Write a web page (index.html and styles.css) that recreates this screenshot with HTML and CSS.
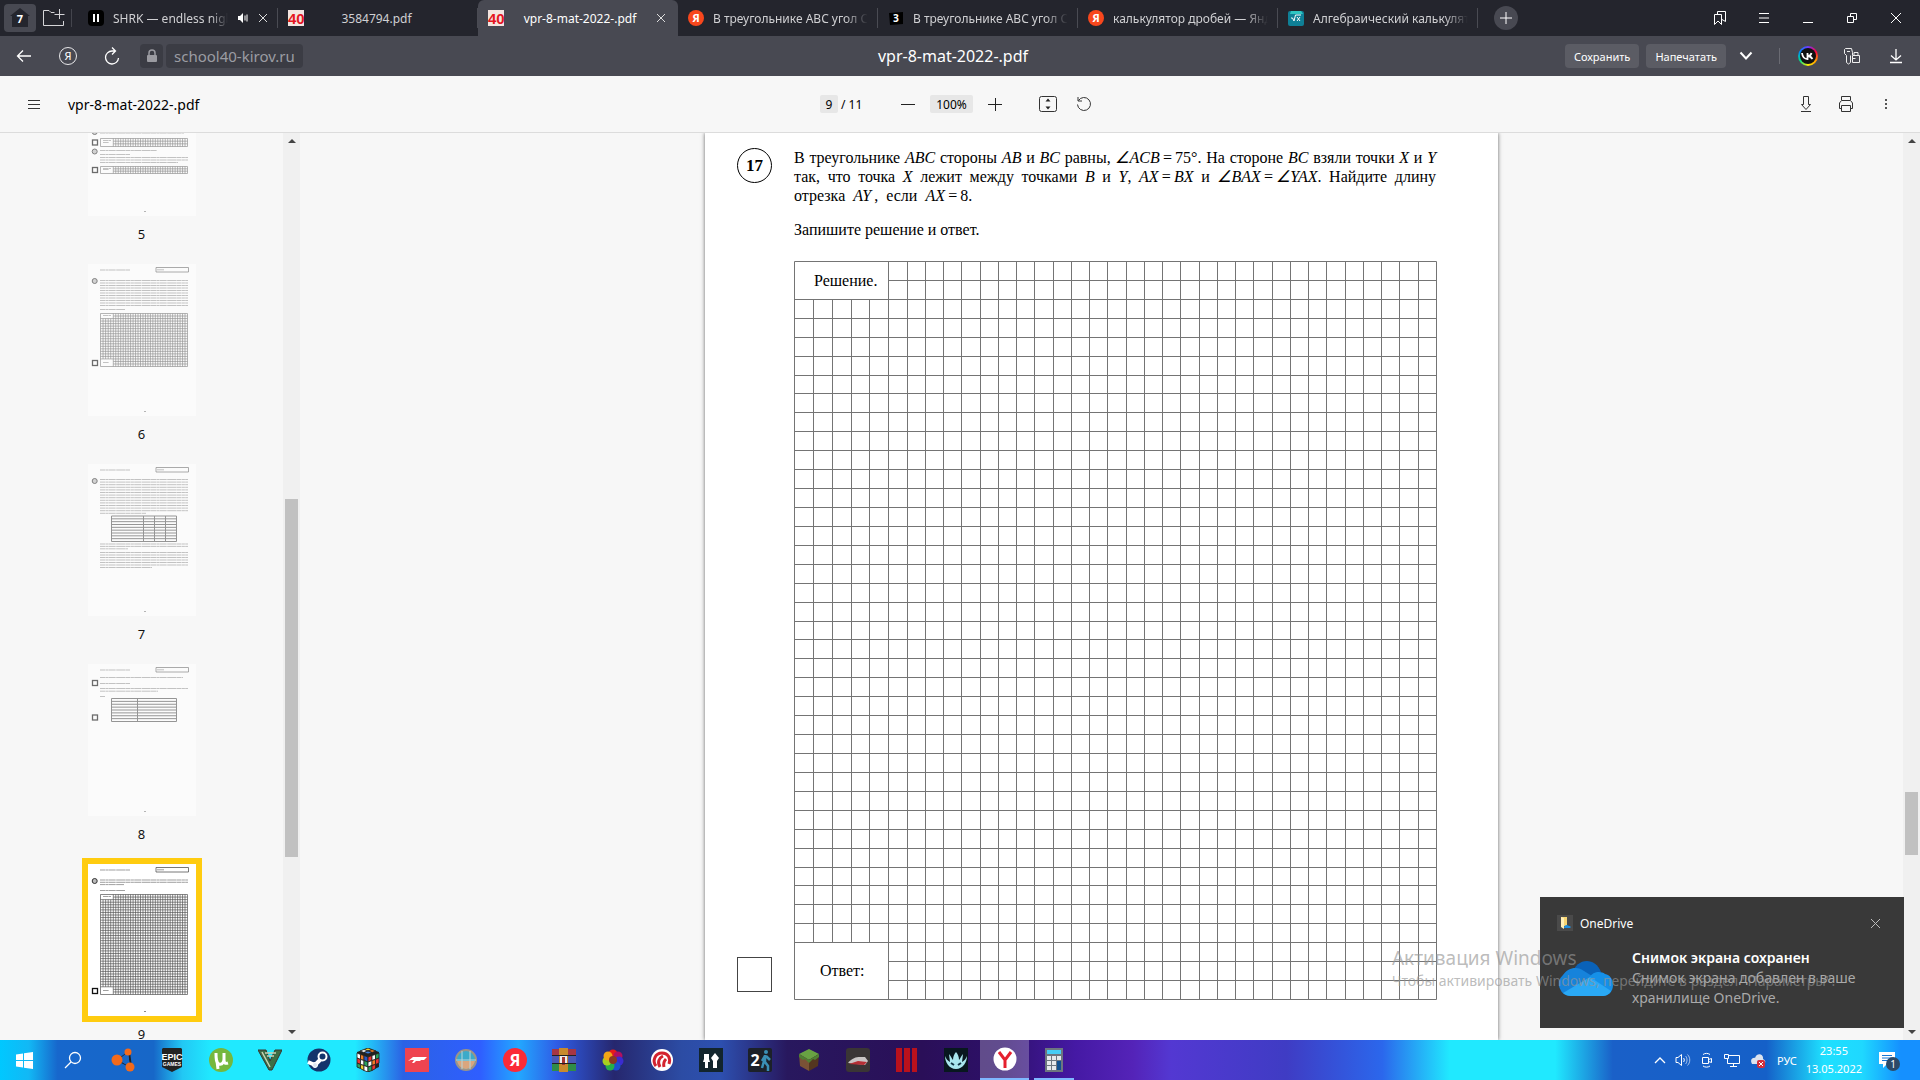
FILE: index.html
```html
<!DOCTYPE html>
<html lang="ru">
<head>
    <meta charset="UTF-8">
    <meta name="viewport" content="width=device-width, initial-scale=1.0">
    <title>vpr-8-mat-2022-.pdf</title>
    <link rel="stylesheet" href="styles.css">
</head>
<body>
    <!-- Вкладки -->
    <header class="tabs">
        <button class="home" aria-label="Все вкладки">
            <svg width="24" height="22" viewBox="0 0 24 22"><path d="M12 1 22 9h-2v11H4V9H2z" fill="#24252d"/></svg>
            <span class="home-count">7</span>
        </button>
        <button class="icon-btn folder" aria-label="Новая группа">
            <svg width="24" height="20" viewBox="0 0 24 20" fill="none" stroke="#d5d5d8"><path d="M12.500 4.500H9L7 2.500H1.500v15h20V13M17.500 1v10M12.500 6.500h10"/></svg>
        </button>
        <nav class="tab-list">
            <a href="#" class="tab">
                <svg width="16" height="16" viewBox="0 0 16 16"><rect width="16" height="16" rx="4"/><path d="M5 4h2v8H5zM9 4h2v8H9z" fill="#fff"/></svg>
                <span class="tab-title">SHRK — endless night</span>
                <svg width="12" height="12" viewBox="0 0 12 12" fill="#fff"><path d="M1 4h2l3-3v10L3 8H1zM7.500 3.500h1v5h-1zM9.500 2.500h1v7h-1z"/></svg>
                <svg width="10" height="10" viewBox="0 0 10 10" stroke="#ddd"><path d="m1 1 8 8M9 1 1 9"/></svg>
            </a>
            <a href="#" class="tab file">
                <svg width="16" height="16" viewBox="0 0 16 16"><rect width="16" height="16" fill="#f3e4e0"/><text x="0" y="14" class="logo40">40</text></svg>
                <span class="tab-title centered">3584794.pdf</span>
            </a>
            <a href="#" class="tab active">
                <svg width="16" height="16" viewBox="0 0 16 16"><rect width="16" height="16" fill="#f3e4e0"/><text x="0" y="14" class="logo40">40</text></svg>
                <span class="tab-title centered">vpr-8-mat-2022-.pdf</span>
                <svg width="10" height="10" viewBox="0 0 10 10" stroke="#ddd"><path d="m1 1 8 8M9 1 1 9"/></svg>
            </a>
            <a href="#" class="tab">
                <svg width="16" height="16" viewBox="0 0 16 16"><circle cx="8" cy="8" r="8" fill="#f8471d"/><text x="8" y="12" class="ya">Я</text></svg>
                <span class="tab-title">В треугольнике ABC угол C</span>
            </a>
            <a href="#" class="tab">
                <svg width="16" height="16" viewBox="0 0 16 16"><path d="M1 3 15 2v12L2 15z"/><text x="8" y="12" class="ya three">З</text></svg>
                <span class="tab-title">В треугольнике ABC угол C</span>
            </a>
            <a href="#" class="tab">
                <svg width="16" height="16" viewBox="0 0 16 16"><circle cx="8" cy="8" r="8" fill="#f8471d"/><text x="8" y="12" class="ya">Я</text></svg>
                <span class="tab-title">калькулятор дробей — Яндекс</span>
            </a>
            <a href="#" class="tab">
                <svg width="16" height="16" viewBox="0 0 16 16"><rect width="16" height="15" y="1" rx="2" fill="#0f7f96"/><path d="M3 1h10l2 3H2z" fill="#2fc5c2"/><path d="m3 8 1.500 0L6 11l1.500-6H13M9 7l3 4M12 7l-3 4" fill="none" stroke="#fff"/></svg>
                <span class="tab-title">Алгебраический калькулятор</span>
            </a>
        </nav>
        <button class="new-tab" aria-label="Новая вкладка">
            <svg width="12" height="12" viewBox="0 0 12 12" stroke="#fff"><path d="M6 0v12M0 6h12"/></svg>
        </button>
        <div class="window-icons">
            <button class="icon-btn" aria-label="Закладки"><svg width="14" height="16" viewBox="0 0 14 16" fill="none" stroke="#fff"><path d="M1.500 4.500h7v10L5 11l-3.500 3.500zM4.500 4V1.500h8v10L9 9.500"/></svg></button>
            <button class="icon-btn" aria-label="Меню"><svg width="12" height="12" viewBox="0 0 12 12" stroke="#fff"><path d="M1 1.500h10M1 6h10M1 10.500h10"/></svg></button>
            <button class="icon-btn" aria-label="Свернуть"><svg width="12" height="12" viewBox="0 0 12 12" stroke="#fff"><path d="M1 10.500h10"/></svg></button>
            <button class="icon-btn" aria-label="Развернуть"><svg width="12" height="12" viewBox="0 0 12 12" fill="none" stroke="#fff"><path d="M1.500 4.500h6v6h-6zM4.500 4V1.500h6v6H8"/></svg></button>
            <button class="icon-btn" aria-label="Закрыть"><svg width="12" height="12" viewBox="0 0 12 12" stroke="#fff"><path d="m1 1 10 10M11 1 1 11"/></svg></button>
        </div>
    </header>

    <!-- Адресная строка -->
    <div class="address">
        <div class="address-left">
            <button class="icon-btn" aria-label="Назад"><svg width="16" height="16" viewBox="0 0 16 16" fill="none" stroke="#fff" stroke-width="1.300"><path d="M15 8H1.500M7 2.500 1.500 8 7 13.500"/></svg></button>
            <button class="icon-btn" aria-label="Яндекс"><svg width="20" height="20" viewBox="0 0 20 20"><circle cx="10" cy="10" r="8.500" fill="none" stroke="#e8e8ea"/><text x="10" y="14" class="ya home-ya">Я</text></svg></button>
            <button class="icon-btn" aria-label="Обновить"><svg width="16" height="18" viewBox="0 0 16 18" fill="none" stroke="#fff" stroke-width="1.300"><path d="M11 4H8a6.500 6.500 0 1 0 6.500 7M8 .5 11.500 4 8 7.500"/></svg></button>
            <span class="lock"><svg width="12" height="14" viewBox="0 0 12 14"><path d="M3 6V4a3 3 0 0 1 6 0v2" fill="none" stroke="#9b9ba1" stroke-width="1.500"/><rect x="1" y="6" width="10" height="7" rx="1" fill="#9b9ba1"/></svg></span>
            <a href="#" class="url">school40-kirov.ru</a>
        </div>
        <div class="address-title">vpr-8-mat-2022-.pdf</div>
        <div class="address-right">
            <button class="chip">Сохранить</button>
            <button class="chip">Напечатать</button>
            <button class="icon-btn arrow" aria-label="Ещё"><svg width="14" height="10" viewBox="0 0 14 10" fill="none" stroke="#fff" stroke-width="2"><path d="m1.500 1.500 5.500 6 5.500-6"/></svg></button>
            <span class="split"></span>
            <button class="icon-btn vk" aria-label="VK"><span class="vk-ring"><svg width="16" height="16" viewBox="0 0 16 16"><circle cx="8" cy="8" r="8" fill="#111"/><path d="M2 5c.5 4 2.500 6 5.500 6V5M8 8c1.500 0 3-1 3.500-3M8 8c2 0 3.500 1.500 4.500 3" fill="none" stroke="#fff" stroke-width="1.800"/></svg></span></button>
            <button class="icon-btn" aria-label="Пароли"><svg width="18" height="18" viewBox="0 0 18 18" fill="none" stroke="#eee"><path d="M9.500 8V5.500l-1-4h-6l-1 1v4l2 2v7l2 1.500 2-1.500v-7M4 4.500h3M9.500 8.500h7v7h-7zM11 8V5.500h4V8M9.500 11.500h3"/></svg></button>
            <button class="icon-btn" aria-label="Загрузки"><svg width="14" height="16" viewBox="0 0 14 16" fill="none" stroke="#fff" stroke-width="1.300"><path d="M7 1v11M2 7.500 7 12l5-4.500M1 14.500h12"/></svg></button>
        </div>
    </div>

    <!-- Панель просмотра PDF -->
    <div class="toolbar">
        <div class="toolbar-left">
            <button class="icon-btn" aria-label="Миниатюры"><svg width="12" height="10" viewBox="0 0 12 10" stroke="#333"><path d="M0 1.500h12M0 5.500h12M0 9.500h12"/></svg></button>
            <span class="file-name">vpr-8-mat-2022-.pdf</span>
        </div>
        <div class="toolbar-center">
            <input class="page-input" type="text" value="9" aria-label="Страница">
            <span class="page-total">/ 11</span>
            <button class="icon-btn" aria-label="Уменьшить"><svg width="14" height="14" viewBox="0 0 14 14" stroke="#222"><path d="M0 7.500h14"/></svg></button>
            <input class="zoom-input" type="text" value="100%" aria-label="Масштаб">
            <button class="icon-btn" aria-label="Увеличить"><svg width="14" height="14" viewBox="0 0 14 14" stroke="#222"><path d="M0 7.500h14M7.500 1v13"/></svg></button>
            <button class="icon-btn fit" aria-label="По высоте"><svg width="18" height="16" viewBox="0 0 18 16"><rect x=".5" y=".5" width="17" height="15" rx="2" fill="none" stroke="#333"/><path d="m9 2.500 2.500 3h-5zM9 13.500l2.500-3h-5z" fill="#222"/></svg></button>
            <button class="icon-btn" aria-label="Повернуть"><svg width="16" height="16" viewBox="0 0 16 16" fill="none" stroke="#333"><path d="M2 1v4h4M2.500 4.500a6.500 6.500 0 1 1-1 4"/></svg></button>
        </div>
        <div class="toolbar-right">
            <button class="icon-btn" aria-label="Скачать"><svg width="12" height="18" viewBox="0 0 12 18" fill="none" stroke="#333"><path d="M3.500 1.500h5v8h2L6 14.500 1.500 9.500h2zM1 16.500h10"/></svg></button>
            <button class="icon-btn" aria-label="Печать"><svg width="16" height="18" viewBox="0 0 16 18" fill="none" stroke="#333"><path d="M3.500 5V1.500h9V5M3.500 13.500h-2V8l2-2.500h9l2 2.500v5.500h-2M3.500 10.500h9v6h-9z"/></svg></button>
            <button class="icon-btn" aria-label="Меню документа"><svg width="4" height="12" viewBox="0 0 4 12" fill="#555"><path d="M1 1h2v2H1zM1 5h2v2H1zM1 9h2v2H1z"/></svg></button>
        </div>
    </div>

    <main class="viewer">
        <aside class="sidebar">
            <div class="thumbs" id="thumbs"></div>
            <div class="scrollbar">
                <span class="up"></span>
                <span class="scroll-thumb side-thumb"></span>
                <span class="down"></span>
            </div>
        </aside>
        <div class="document">
            <article class="page">
                <span class="number">17</span>
                <div class="task">
                    <p class="line">В треугольнике <i>ABC</i> стороны <i>AB</i> и <i>BC</i> равны, <i>∠ACB</i>&#8201;=&#8201;75°. На стороне <i>BC</i> взяли точки <i>X</i> и <i>Y</i></p>
                    <p class="line">так, что точка&nbsp;<i>X</i> лежит между точками <i>B</i> и <i>Y</i>, <i>AX</i>&#8201;=&#8201;<i>BX</i> и <i>∠BAX</i>&#8201;=&#8201;<i>∠YAX</i>. Найдите длину</p>
                    <p>отрезка&ensp;<i>AY</i>&#8201;,&ensp;если&ensp;<i>AX</i>&#8201;=&#8201;8.</p>
                    <p class="hint">Запишите решение и ответ.</p>
                </div>
                <span class="score"></span>
                <svg class="squares" width="643" height="741" viewBox="0 0 643 741">
                    <path id="squares" fill="none" stroke="#747474"/>
                    <text x="20" y="25">Решение.</text>
                    <text x="26" y="715">Ответ:</text>
                </svg>
            </article>
        </div>
        <div class="scrollbar">
            <span class="up"></span>
            <span class="scroll-thumb doc-thumb"></span>
            <span class="down"></span>
        </div>
    </main>

    <!-- Уведомление -->
    <section class="toast">
        <div class="toast-head">
            <svg width="16" height="16" viewBox="0 0 16 16"><rect width="16" height="16" fill="#4a4a4a"/><path d="M4 2h6v9H4z" fill="#f8d673"/><path d="M4 2 7 3v11l-3-2z" fill="#fff0b8"/><path d="M7 13c0-3 3-4 5-2 2-.5 2 2 1 2z" fill="#1e8fe0"/></svg>
            <span>OneDrive</span>
            <button class="icon-btn toast-close" aria-label="Закрыть уведомление"><svg width="11" height="11" viewBox="0 0 11 11" stroke="#bbb"><path d="m1 1 9 9M10 1l-9 9"/></svg></button>
        </div>
        <div class="toast-body">
            <svg width="54" height="36" viewBox="0 0 54 36">
                <path d="M13 14C17-2 36-4 42 12L32 24z" fill="#0a62b8"/>
                <path d="M12 36A12 12 0 0 1 4 15c5-8 15-9 21-4l16 10-12 15z" fill="#1683db"/>
                <path d="M30 18c4-7 12-7 16-4 5 1 8 5 8 11 0 7-5 11-10 11H30z" fill="#1590e8"/>
                <path d="M4 33 31 17l21 14c-2 4-6 5-9 5H12c-3 0-6-1-8-3z" fill="#2aa9f5"/>
            </svg>
            <div class="toast-text">
                <b>Снимок экрана сохранен</b>
                <p>Снимок экрана добавлен в ваше хранилище OneDrive.</p>
            </div>
        </div>
    </section>
    <div class="watermark">
        <div class="watermark-title">Активация Windows</div>
        <div>Чтобы активировать Windows, перейдите в раздел "Параметры".</div>
    </div>

    <!-- Панель задач -->
    <footer class="taskbar">
        <button class="app start" aria-label="Пуск"><svg width="17" height="17" viewBox="0 0 17 17" fill="#fff"><path d="m0 2.500 7-1V8H0zM8 1.300 17 0v8H8zM0 9h7v6.500l-7-1zM8 9h9v8l-9-1.300z"/></svg></button>
        <button class="app search" aria-label="Поиск"><svg width="18" height="18" viewBox="0 0 18 18" fill="none" stroke="#fff" stroke-width="1.300"><circle cx="11" cy="7" r="5.500"/><path d="m7 11-6 6"/></svg></button>
        <button class="app" aria-label="Связи"><svg width="24" height="24" viewBox="0 0 24 24"><path d="M7 12 18 4l2 15z" fill="none" stroke="#222" stroke-width="2"/><path d="M7 12 17 4l2 15z" fill="#1767c8"/><g fill="#f26a1b"><circle cx="6" cy="12" r="5.500"/><circle cx="17" cy="4" r="3.500"/><circle cx="19" cy="19" r="4.500"/></g></svg></button>
        <button class="app" aria-label="Epic Games"><svg width="22" height="24" viewBox="0 0 22 24"><path d="M2 0h18l1 1v18l-10 5L1 19V1z" fill="#222"/><text x="11" y="12" class="epic">EPIC</text><text x="11" y="18" class="epic games">GAMES</text></svg></button>
        <button class="app" aria-label="uTorrent"><svg width="24" height="24" viewBox="0 0 24 24"><circle cx="12" cy="12" r="12" fill="#75b83e"/><path d="M7 5c0 5 0 10 3 11 4 1 5-3 5-5V5m0 6c0 4 1 5 4 4M8 13l1 8" fill="none" stroke="#fff" stroke-width="3"/></svg></button>
        <button class="app" aria-label="V"><svg width="24" height="22" viewBox="0 0 24 22"><path d="M0 1h8l4 11 5-11h7L14 21h-3z" fill="#3c6e46" stroke="#39352f"/><path d="M7 4h11M9 7h7M4 3l8 15" stroke="#c9d2b5" stroke-width="1.500"/></svg></button>
        <button class="app" aria-label="Steam"><svg width="24" height="24" viewBox="0 0 24 24"><circle cx="12" cy="12" r="11.500" fill="#14346c"/><path d="m1 14 7 3 7-7" stroke="#fff" stroke-width="4" fill="none"/><circle cx="15.500" cy="8.500" r="4" fill="#14346c" stroke="#fff" stroke-width="2"/><circle cx="8" cy="17" r="2.500" fill="#dde5f0" stroke="#fff"/></svg></button>
        <button class="app" aria-label="Кубик"><svg width="24" height="24" viewBox="0 0 24 24"><path d="m12 0 11 4v15l-11 5L1 19V4z" fill="#222"/><g stroke="#222" stroke-width=".8"><path d="m12 0 4 1.500-4 1.500-4-1.500z" fill="#f3d22f"/><path d="m8 1.500 4 1.500-4 1.500-4-1.500z" fill="#fff"/><path d="m16 1.500 4 1.500-4 1.500-4-1.500z" fill="#ef7c25"/><path d="m12 3 4 1.500L12 6 8 4.500z" fill="#3b7de0"/><path d="M1 5l3.500 1.500v5L1 10z" fill="#fff"/><path d="m4.500 6.500 3.500 1v5l-3.500-1z" fill="#ef7c25"/><path d="m8 7.500 4 1.500v5l-4-1.500z" fill="#2a58c9"/><path d="m1 10 3.500 1.500v5L1 15z" fill="#e33"/><path d="m4.500 11.500 3.500 1v5l-3.500-1z" fill="#fff"/><path d="m8 12.500 4 1.500v5l-4-1.500z" fill="#2aa35c"/><path d="m1 15 3.500 1.500v4L1 19z" fill="#2aa35c"/><path d="m4.500 16.500 3.500 1v5l-3.500-2z" fill="#f3d22f"/><path d="m8 17.500 4 1.500v5l-4-1.500z" fill="#fff"/><path d="m12 9 4-1.500v5L12 14z" fill="#e33"/><path d="m16 7.500 3.500-1v5l-3.500 1z" fill="#fff"/><path d="M19.500 6.500 23 5v5l-3.500 1.500z" fill="#2aa35c"/><path d="m12 14 4-1.500v5L12 19z" fill="#f7f7f7"/><path d="m16 12.500 3.500-1v5l-3.500 1z" fill="#ef7c25"/><path d="m19.500 11.500 3.500-1.500v5l-3.500 1.500z" fill="#e33"/><path d="m12 19 4-1.500v5L12 24z" fill="#2aa35c"/><path d="m16 17.500 3.500-1v4l-3.500 2z" fill="#e33"/></g></svg></button>
        <button class="app" aria-label="Forza"><svg width="24" height="24" viewBox="0 0 24 24"><rect width="24" height="24" fill="#ee4450"/><path d="M3 13 8 9h14l-3 3h-3l-1 1h-4l-2 2H7l2-3H6z" fill="#fff"/></svg></button>
        <button class="app" aria-label="Часы"><svg width="24" height="24" viewBox="0 0 24 24"><circle cx="12" cy="12" r="10" fill="#3caac9" stroke="#9b9488" stroke-width="2"/><path d="M3 13h18c-1 5-5 8-9 8s-8-3-9-8z" fill="#d9a67e"/><path d="M2 12h20M8 3v18M16 3v18" stroke="#b9d5da"/></svg></button>
        <button class="app" aria-label="Яндекс"><svg width="24" height="24" viewBox="0 0 24 24"><circle cx="12" cy="12" r="12" fill="#fb2b37"/><text x="12" y="18" class="ya big">Я</text></svg></button>
        <button class="app" aria-label="WinRAR"><svg width="24" height="24" viewBox="0 0 24 24"><path d="M0 1h24v7H0z" fill="#a53644"/><path d="M0 8h24v8H0z" fill="#4b58b5"/><path d="M0 16h24v7H0z" fill="#2f8c48"/><path d="M7 0h9v24H7z" fill="#c98a2c"/><path d="M8 7h7v8H8z" fill="#eee"/><path d="M10 9h3v8h-3z" fill="#a5332e"/><path d="M0 7.500h24M0 15.500h24" stroke="#222"/></svg></button>
        <button class="app" aria-label="Палитра"><svg width="22" height="22" viewBox="0 0 22 22"><circle cx="11" cy="5" r="4.500" fill="#e61b1b"/><circle cx="16" cy="7" r="4.500" fill="#b01060"/><circle cx="17" cy="12" r="4.500" fill="#3b2bd0"/><circle cx="14" cy="17" r="4.500" fill="#1c4fd0"/><circle cx="8" cy="17" r="4.500" fill="#24b04b"/><circle cx="5" cy="12" r="4.500" fill="#a6d120"/><circle cx="6" cy="7" r="4.500" fill="#f2a516"/><circle cx="11" cy="11" r="4" fill="#8a3a20"/></svg></button>
        <button class="app" aria-label="Музыка"><svg width="22" height="22" viewBox="0 0 22 22"><circle cx="11" cy="11" r="11" fill="#fff"/><path d="M5 17C1 12 4 4 11 4c6 0 9 5 7 11M9 18c-3-5-1-9 3-11M13 18c-1-4 0-6 2-8" fill="none" stroke="#d3232f" stroke-width="3"/></svg></button>
        <button class="app" aria-label="Игра"><svg width="24" height="24" viewBox="0 0 24 24"><rect width="24" height="24" fill="#12252d"/><path d="M5 6h5v5l1 3H9v6H6v-6H4l1-3zM16 5l4 5-2 3v7h-4v-7l-2-3z" fill="#fff"/></svg></button>
        <button class="app" aria-label="Portal 2"><svg width="24" height="24" viewBox="0 0 24 24"><rect width="24" height="24" rx="2" fill="#1c2129"/><text x="7" y="18" class="ya big">2</text><circle cx="18" cy="4" r="2" fill="#3a8fb5"/><path d="M17 7v7l3 4v5M17 8l-3 5M18 8l4 4M16 13l-2 7" fill="none" stroke="#3a8fb5" stroke-width="2.500"/></svg></button>
        <button class="app" aria-label="Minecraft"><svg width="24" height="24" viewBox="0 0 24 24"><path d="m12 1 10 5-10 6L2 6z" fill="#68a243"/><path d="m2 6 10 6v11L3 18z" fill="#7a5236"/><path d="m22 6-10 6v11l9-5z" fill="#54361f"/><path d="m2 6 10 6 10-6v3l-4 3-2-1-4 4-4-4-2 1-4-3z" fill="#4d8132"/></svg></button>
        <button class="app" aria-label="Гонки"><svg width="24" height="24" viewBox="0 0 24 24"><rect width="24" height="24" rx="3" fill="#3a3535"/><path d="M2 15c4-5 8-6 12-6h5l3 4-3 4z" fill="#c9c4c4"/><path d="m3 16 9-3 9 1-3 3z" fill="#b52f35"/></svg></button>
        <button class="app" aria-label="III"><svg width="22" height="24" viewBox="0 0 22 24" fill="#b9111c"><path d="M0 0h6v24H0zM8 0h6v24H8zM16 0h5v24h-5z"/></svg></button>
        <button class="app" aria-label="Маска"><svg width="24" height="24" viewBox="0 0 24 24"><rect width="24" height="24" fill="#08171f"/><path d="M1 8c1 3 3 5 5 6L5 6c2 2 3 5 4 6 0-3 1-6 3-8 2 2 3 5 3 8 1-1 2-4 4-6l-1 8c2-1 4-3 5-6 0 6-4 13-11 13S1 14 1 8z" fill="#a8e6ee"/><path d="m7 15 3 2M17 15l-3 2" stroke="#134" stroke-width="2"/></svg></button>
        <button class="app current" aria-label="Яндекс Браузер"><svg width="24" height="24" viewBox="0 0 24 24"><circle cx="12" cy="12" r="11.500" fill="#fff"/><path d="m6 5 6 8 6-8M12 12v9" fill="none" stroke="#e5202e" stroke-width="3"/></svg></button>
        <button class="app open" aria-label="Калькулятор"><svg width="18" height="24" viewBox="0 0 18 24"><rect width="18" height="24" fill="#6d7680"/><path d="M2 2h14v4H2z" fill="#46cdf5"/><path d="M2 8h4v4H2zM7 8h4v4H7zM12 8h4v4h-4zM2 13h4v4H2zM7 13h4v4H7zM2 18h4v4H2zM7 18h4v4H7z" fill="#e6e9ec"/><path d="M12 13h4v9h-4z" fill="#12508f"/></svg></button>

        <div class="tray">
            <svg width="12" height="8" viewBox="0 0 12 8" fill="none" stroke="#fff" stroke-width="1.300"><path d="m1 7 5-5 5 5"/></svg>
            <svg width="16" height="14" viewBox="0 0 16 14" fill="none" stroke="#fff"><path d="M1 4.500h2l3.500-3v11L3 9.500H1zM8.500 5c1 1 1 3 0 4"/><path d="M10.500 3c2 2 2 6 0 8M12.500 1.500c3 3 3 8 0 11" opacity=".6"/></svg>
            <svg width="14" height="16" viewBox="0 0 14 16" fill="none" stroke="#fff"><path d="M3 2.500c2-1.500 5-1.500 7 0M3 14c2 1.500 5 1.500 7 0M2.500 5.500h6v6h-6zM8.500 7.500l3-1v4l-3-1"/></svg>
            <svg width="18" height="14" viewBox="0 0 18 14" fill="none" stroke="#fff"><path d="M5.500 2.500h11v8h-12V6M10.500 10.500v3M7 13.500h7M1.500 1.500h4v4h-4z"/></svg>
            <svg width="16" height="15" viewBox="0 0 16 15"><path d="M2 11C-1 6 4 4 5 5c2-6 9-4 8 1 4 2 2 5 0 5z" fill="#dce3ee"/><rect x="7" y="7" width="8" height="8" rx="2" fill="#d32e3c"/><path d="m9 9 4 4M13 9l-4 4" stroke="#fff"/></svg>
            <span class="lang">РУС</span>
            <time class="clock">23:55<br>13.05.2022</time>
            <span class="messages">
                <svg width="18" height="18" viewBox="0 0 18 18"><path d="M1 1h16v12H9l-4 4v-4H1z" fill="#fff"/><path d="M4 4.500h10M4 7h10M4 9.500h7" stroke="#1577d5"/></svg>
                <span class="badge">1</span>
            </span>
        </div>
    </footer>

    <script src="script.js"></script>
</body>
</html>
```
FILE: styles.css
```css
* {
    box-sizing: border-box;
    margin: 0;
    padding: 0;
}

body {
    height: 100vh;
    display: flex;
    flex-direction: column;
    overflow: hidden;
    font-family: "Noto Sans", "Open Sans", sans-serif;
    font-size: 12px;
    background: #f7f7f7;
}

button {
    border: none;
    background: none;
    font-family: inherit;
    color: inherit;
    cursor: pointer;
}

a {
    color: inherit;
    text-decoration: none;
}

svg {
    display: block;
    flex: none;
}

.icon-btn {
    display: flex;
    align-items: center;
    justify-content: center;
    width: 44px;
    height: 28px;
    flex: none;
}

/* вкладки */
.tabs {
    display: flex;
    align-items: center;
    height: 36px;
    padding-left: 4px;
    background: #24252d;
    color: #d0d0d3;
    flex: none;
}

.home {
    display: grid;
    place-items: center;
    width: 32px;
    height: 28px;
    border-radius: 4px;
    background: #484952;
}

.home svg,
.home-count {
    grid-area: 1 / 1;
}

.home-count {
    color: #fff;
    font-size: 11px;
    font-weight: bold;
}

.folder {
    width: 36px;
    height: 18px;
    border-right: 1px solid #44454d;
}

.tab-list {
    display: flex;
    margin-left: 6px;
    height: 36px;
    min-width: 0;
}

.tab {
    display: flex;
    align-items: center;
    gap: 9px;
    width: 200px;
    padding: 0 10px;
    background: linear-gradient(#4a4b53, #4a4b53) no-repeat right center / 1px 20px;
    min-width: 0;
}

.tab.file {
    padding-right: 38px;
}

.tab.active {
    gap: 7px;
    padding-right: 12px;
    background: #484952;
    border-radius: 6px 6px 0 0;
    color: #fff;
}

.tab-title {
    flex: 1;
    overflow: hidden;
    white-space: nowrap;
    mask-image: linear-gradient(to right, #000 85%, transparent);
}

.tab-title.centered {
    text-align: center;
    mask-image: none;
}

.logo40 {
    font: bold 15px "Liberation Sans", sans-serif;
    fill: #e5141f;
}

.ya {
    font: bold 11px "Noto Sans", sans-serif;
    fill: #fff;
    text-anchor: middle;
}

.ya.home-ya {
    font-weight: normal;
}

.ya.three {
    font-size: 10px;
}

.ya.big {
    font-size: 16px;
}

.new-tab {
    display: grid;
    place-items: center;
    width: 24px;
    height: 24px;
    margin-left: 16px;
    border-radius: 50%;
    background: #484952;
}

.window-icons {
    display: flex;
    margin-left: auto;
    padding-right: 2px;
}

/* адресная строка */
.address {
    display: grid;
    grid-template-columns: 1fr auto 1fr;
    align-items: center;
    height: 40px;
    background: #484952;
    color: #fff;
    flex: none;
}

.address-left {
    display: flex;
    align-items: center;
    padding-left: 2px;
}

.lock {
    display: grid;
    place-items: center;
    width: 23px;
    height: 24px;
    margin-left: 6px;
    border-radius: 4px;
    background: #3b3c44;
}

.url {
    height: 24px;
    margin-left: 3px;
    padding: 0 8px;
    border-radius: 4px;
    background: #3b3c44;
    color: #9b9ca3;
    font-size: 15px;
    line-height: 24px;
}

.address-title {
    margin-right: 14px;
    font-size: 16px;
}

.address-right {
    display: flex;
    align-items: center;
    justify-content: flex-end;
    padding-right: 2px;
}

.chip {
    height: 24px;
    margin-right: 7px;
    padding: 0 9px;
    border-radius: 4px;
    background: #5b5c64;
    font-size: 11px;
}

.arrow {
    width: 26px;
}

.split {
    width: 1px;
    height: 16px;
    margin: 0 6px 0 20px;
    background: #6a6b73;
}

.vk-ring {
    padding: 2px;
    border-radius: 50%;
    background: conic-gradient(#7038ff, #f04, #f90, #fe0, #0d8, #08f, #7038ff);
}

/* панель pdf */
.toolbar {
    display: grid;
    grid-template-columns: 1fr auto 1fr;
    align-items: center;
    height: 57px;
    border-bottom: 1px solid #dcdcdc;
    background: #f7f7f7;
    color: #000;
    flex: none;
}

.toolbar-left {
    display: flex;
    align-items: center;
    padding-left: 12px;
}

.file-name {
    margin-left: 12px;
    font-size: 14px;
}

.toolbar-center {
    display: flex;
    align-items: center;
}

.toolbar-center input {
    height: 18px;
    border: none;
    border-radius: 2px;
    background: #e7e7e7;
    font: 12px "Noto Sans", sans-serif;
    text-align: center;
}

.page-input {
    width: 18px;
}

.page-total {
    width: 48px;
    padding-left: 3px;
}

.zoom-input {
    width: 43px;
}

.toolbar-center .fit {
    width: 40px;
    margin-left: 11px;
}

.toolbar-center .icon-btn:last-child {
    width: 32px;
}

.toolbar-right {
    display: flex;
    justify-content: flex-end;
    padding-right: 14px;
}

.toolbar-right .icon-btn {
    width: 40px;
}

/* область просмотра */
.viewer {
    display: flex;
    flex: 1;
    min-height: 0;
}

.sidebar {
    display: flex;
    width: 300px;
    flex: none;
}

.thumbs {
    flex: 1;
    display: flex;
    flex-direction: column;
    justify-content: flex-end;
    align-items: center;
    overflow: hidden;
}

.thumb {
    width: 108px;
    height: 200px;
    flex: none;
    text-align: center;
    line-height: 36px;
    color: #111;
    font-size: 13px;
}

.thumb:last-child {
    margin-bottom: -24px;
}

.thumb svg {
    background: #fff;
    opacity: 0.6;
}

.thumb.selected svg {
    opacity: 1;
    outline: 6px solid #ffcc0f;
}

.scrollbar {
    display: flex;
    flex-direction: column;
    align-items: center;
    width: 17px;
    padding: 6px 0;
    background: #f0f0f0;
    flex: none;
}

.up,
.down {
    border: 4px solid transparent;
}

.up {
    border-top: none;
    border-bottom-color: #444;
}

.down {
    margin-top: auto;
    border-bottom: none;
    border-top-color: #444;
}

.scroll-thumb {
    width: 13px;
    background: #c1c1c1;
}

.side-thumb {
    height: 40%;
    margin-top: 356px;
}

.doc-thumb {
    height: 7%;
    margin-top: 649px;
}

.document {
    flex: 1;
    display: flex;
    justify-content: center;
    min-width: 0;
    overflow: hidden;
}

.page {
    display: grid;
    grid-template-columns: 35px 642px;
    grid-template-rows: auto 1fr;
    column-gap: 22px;
    width: 793px;
    padding: 15px 32px 0;
    background: #fff;
    box-shadow: 0 0 4px rgba(0, 0, 0, 0.6);
    font: 16px/19px "Liberation Serif", serif;
    color: #000;
}

.number {
    width: 35px;
    height: 35px;
    border: 1px solid #000;
    border-radius: 50%;
    text-align: center;
    font-weight: bold;
    font-size: 17px;
    line-height: 33px;
}

.line {
    text-align: justify;
    text-align-last: justify;
    white-space: nowrap;
}

.hint {
    margin: 15px 0 22px;
}

.squares {
    fill: #000;
}

.score {
    width: 35px;
    height: 35px;
    margin-top: 696px;
    border: 1px solid #444;
}

/* уведомление */
.toast {
    position: absolute;
    right: 16px;
    bottom: 52px;
    width: 364px;
    height: 131px;
    padding: 16px 19px;
    background: #393939;
    color: #fff;
}

.toast-head {
    display: flex;
    align-items: center;
    gap: 7px;
    height: 20px;
    margin-left: -2px;
    font-size: 12px;
}

.toast-close {
    width: 20px;
    margin-left: auto;
}

.toast-body {
    display: flex;
    align-items: center;
    gap: 19px;
    margin-top: 15px;
}

.toast-text {
    font-size: 14px;
    line-height: 20px;
    color: #aaa;
}

.toast-text b {
    color: #fff;
    font-weight: 600;
}

.watermark {
    position: absolute;
    right: 72px;
    bottom: 89px;
    width: 456px;
    color: rgba(150, 150, 150, 0.65);
    font-size: 14px;
    line-height: 20px;
    white-space: nowrap;
}

.watermark-title {
    font-size: 19px;
    line-height: 25px;
}

/* панель задач */
.taskbar {
    display: flex;
    height: 40px;
    flex: none;
    background: linear-gradient(to right, #00c8ff 0, #12b8f5 1.5%, #1767cc 3%, #1767c8 8%, #22c8f4 9.500%, #20e9ff 11%, #20e9ff 18.500%, #2b62e4 21%, #2f5eff 25%, #22a8ff 27%, #2f5ce6 29%, #26276e 32%, #2c4ca4 35.500%, #2d50b0 37.500%, #28185e 41%, #2a0f58 48%, #2d1068 52%, #4519a4 56%, #5423b8 59%, #5338d2 61%, #3f3cc4 67%, #2b67ec 72%, #20e9ff 75.500%, #20e9ff 81%, #1a60c8 84%, #1560c8 92%, #1ee0ff 95%, #1fd8ff 97%, #1590ff 99%);
    color: #fff;
}

.app {
    display: grid;
    place-items: center;
    width: 49px;
    height: 40px;
}

.start {
    width: 48px;
}

.search {
    width: 50px;
}

.app.current {
    background: rgba(255, 255, 255, 0.25);
    border-bottom: 2px solid #7fb8ff;
}

.app.open {
    background: linear-gradient(#7fb8ff, #7fb8ff) no-repeat center bottom / 40px 2px;
}

.epic {
    font: bold 9px "Liberation Sans", sans-serif;
    fill: #fff;
    text-anchor: middle;
}

.epic.games {
    font-size: 5px;
}

.tray {
    display: flex;
    align-items: center;
    gap: 9px;
    margin-left: auto;
    padding-right: 24px;
}

.lang {
    margin-left: 2px;
    font-size: 11px;
}

.clock {
    text-align: center;
    font-size: 11px;
    line-height: 18px;
}

.messages {
    position: relative;
    margin-left: 7px;
}

.badge {
    position: absolute;
    left: 8px;
    top: 6px;
    width: 14px;
    height: 14px;
    border-radius: 50%;
    background: #2c4a68;
    font-size: 10px;
    line-height: 14px;
    text-align: center;
}
```
FILE: script.js
```js
// Линии клетчатого поля: слева 5 широких клеток, дальше 30 обычных.
// top и bottom - сколько строк занимают подписи "Решение" и "Ответ"
function gridPath(x, y, w, h, rows, top, bottom) {
    const left = w * 0.147;
    const snap = v => w > 200 ? Math.round(v) + 0.5 : v;
    const rowY = r => snap(y + h * r / rows);
    let d = "";
    for (let r = 0; r <= rows; r++) {
        const inside = (r > 0 && r < top) || (r > rows - bottom && r < rows);
        d += "M" + snap(inside ? x + left : x) + " " + rowY(r) + "H" + snap(x + w);
    }
    for (let c = 0; c <= 35; c++) {
        const cx = c < 5 ? x + left * c / 5 : x + left + (w - left) * (c - 5) / 30;
        const short = c > 0 && c < 5;
        d += "M" + snap(cx) + " " + rowY(short ? top : 0) + "V" + rowY(short ? rows - bottom : rows);
    }
    return d;
}

document.getElementById("squares").setAttribute("d", gridPath(0, 0, 642, 738, 39, 2, 3));

// Части миниатюр
const stroke = (d, width, extra) => `<path d="${d}" fill="none" stroke="#555" stroke-width="${width}" ${extra || ""}/>`;
const words = (x, y, w) => stroke(`M${x} ${y}h${w}`, 0.7, 'stroke-dasharray="5 .4 3 .3 7 .5 9 .3" opacity=".8"');
const text = (y, count, step, last) => {
    let s = "";
    for (let i = 0; i < count; i++) {
        s += words(12, y + i * step, i === count - 1 ? last : 88);
    }
    return s;
};
const head = words(12, 6, 30) + stroke("M68 3.500h32.500v4.500H68z", 0.8) + stroke("M69 5.700h7", 1.5, 'opacity=".4"');
const circle = y => `<circle cx="6.700" cy="${y}" r="2.500" fill="#bbb" stroke="#333"/>`;
const box = y => `<rect x="4.500" y="${y}" width="5" height="5" fill="#fff" stroke="#111" stroke-width="1.300"/>`;
const squares = (y, h, rows, top, bottom) =>
    stroke(gridPath(12.5, y, 87, h, rows, top, bottom), 0.7) + words(15, y + 2, 8) + words(15, y + h - 4, 6);
const table = (y, h, rows, cols) => {
    let d = `M23.500 ${y}h65v${h}h-65z`;
    for (let i = 1; i < rows; i++) {
        d += `M23.500 ${y + h * i / rows}h65`;
    }
    cols.forEach(c => d += `M${c} ${y}v${h}`);
    return stroke(d, 1, 'stroke-opacity="1"');
};

const pages = {
    5: circle(68) + text(69, 1, 1, 84) + box(76) + squares(74.5, 8, 3, 3, 0) + circle(87.5) + text(86.5, 1, 1, 57)
        + text(90.5, 1, 1, 30) + text(93.5, 3, 2.5, 78) + box(103.5) + squares(102.5, 7, 3, 3, 0),
    6: head + circle(17) + text(16.5, 11, 2.5, 88) + text(45.5, 1, 1, 25) + squares(49.5, 53, 21, 2, 3) + box(96.5),
    7: head + circle(17) + text(15.5, 14, 2.6, 46) + table(52, 25.5, 9, [55.5, 66.5, 77.5]) + text(80, 3, 2.4, 28) + text(88.5, 7, 2.5, 52),
    8: head + text(13.5, 1, 1, 83) + box(16.5) + text(19.5, 1, 1, 30) + text(24.5, 2, 2.7, 58) + words(12, 32.5, 5)
        + table(34.5, 23, 8, [49.5]) + box(51),
    9: head + circle(17) + text(16, 3, 2.3, 24) + text(26.5, 1, 1, 25) + squares(30.5, 100, 39, 2, 3) + box(124.5)
};

document.getElementById("thumbs").innerHTML = Object.keys(pages).map(n =>
    `<div class="thumb${n === "9" ? " selected" : ""}">
        <svg width="108" height="152" viewBox="0 0 108 152">${pages[n]}<path d="M56 147.500h2" stroke="#888"/></svg>${n}
    </div>`).join("");
```
